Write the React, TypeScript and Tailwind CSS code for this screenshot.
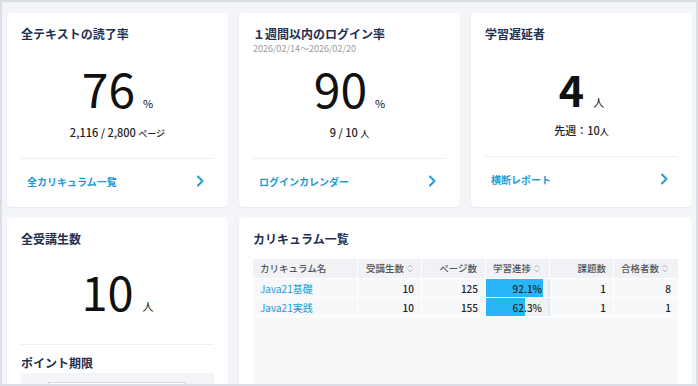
import { ReactNode } from 'react';

const FONT = { fontFamily: '"Noto Sans CJK JP", "Noto Sans", sans-serif' };

function Chevron() {
  return (
    <svg width="8" height="12" viewBox="0 0 8 12" fill="none">
      <path d="M2 1.5 L6.5 6 L2 10.5" stroke="#1e9ad6" strokeWidth="2" strokeLinecap="round" strokeLinejoin="round" />
    </svg>
  );
}

function SortIcon() {
  return (
    <svg width="6" height="9" viewBox="0 0 6 9" fill="none" className="ml-[3px]">
      <path d="M1 3.2 L3 1.2 L5 3.2 M1 5.8 L3 7.8 L5 5.8" stroke="#a8acb3" strokeWidth="0.9" strokeLinecap="round" strokeLinejoin="round" />
    </svg>
  );
}

type StatCardProps = {
  title: string;
  subtitle?: string;
  value: string;
  unit: string;
  bold?: boolean;
  detail: ReactNode;
  link: string;
};

function StatCard({ title, subtitle, value, unit, bold, detail, link }: StatCardProps) {
  return (
    <div className="flex flex-col rounded-[4px] bg-white px-[14px] pt-[12px] shadow-[0_1px_2px_rgba(0,0,0,0.06)]">
      <div className="h-[37px] shrink-0">
        <h2 className="text-[12px] font-bold leading-[18px] text-[#1f3050]">{title}</h2>
        {subtitle && <p className="mt-[1px] text-[9px] leading-[10px] text-[#9a9ca1]">{subtitle}</p>}
      </div>
      {bold ? (
        <div className="mt-[1px] flex h-[50px] shrink-0 items-baseline justify-center gap-[9px] leading-[50px] text-[#111]">
          <span className="text-[43px] font-semibold">{value}</span>
          <span className="text-[11px]">{unit}</span>
        </div>
      ) : (
        <div className="flex h-[50px] shrink-0 items-baseline justify-center gap-[8px] leading-[50px] text-[#111]">
          <span className="text-[48px]">{value}</span>
          <span className="text-[11px]">{unit}</span>
        </div>
      )}
      <div className={`${bold ? 'mt-[9px]' : 'mt-[12px]'} text-center text-[11px] font-medium leading-[16px] text-[#222]`}>
        {detail}
      </div>
      <div className="mt-[16px] border-t border-[#eceef1]" />
      <div className="mt-[12px] flex h-[20px] shrink-0 items-center justify-between pl-[6px] pr-[10px]">
        <span className="text-[10px] font-bold text-[#1e9ad6]">{link}</span>
        <Chevron />
      </div>
    </div>
  );
}

const CURRICULA = [
  { name: 'Java21基礎', students: 10, pages: 125, progress: 92.1, tasks: 1, passed: 8 },
  { name: 'Java21実践', students: 10, pages: 155, progress: 62.3, tasks: 1, passed: 1 },
];

export default function App() {
  return (
    <div
      style={FONT}
      className="h-[386px] w-[698px] overflow-hidden border-2 border-[#dcdee6] bg-[#f4f5f8] pl-[5px] pt-[11px]"
    >
      <div className="grid grid-cols-[221px_221px_221px] grid-rows-[194px_200px] gap-[11px]">
        <StatCard
          title="全テキストの読了率"
          value="76"
          unit="%"
          detail={
            <>
              2,116 / 2,800 <span className="text-[9px]">ページ</span>
            </>
          }
          link="全カリキュラム一覧"
        />
        <StatCard
          title="１週間以内のログイン率"
          subtitle="2026/02/14〜2026/02/20"
          value="90"
          unit="%"
          detail={
            <>
              9 / 10 <span className="text-[9px]">人</span>
            </>
          }
          link="ログインカレンダー"
        />
        <StatCard
          title="学習遅延者"
          value="4"
          unit="人"
          bold
          detail={
            <>
              先週：10<span className="text-[9px]">人</span>
            </>
          }
          link="横断レポート"
        />

        {/* 全受講生数 */}
        <div className="flex flex-col overflow-hidden rounded-[4px] bg-white px-[14px] pt-[12px] shadow-[0_1px_2px_rgba(0,0,0,0.06)]">
          <h2 className="h-[36px] shrink-0 text-[12px] font-bold leading-[18px] text-[#1f3050]">全受講生数</h2>
          <div className="flex h-[50px] shrink-0 items-baseline justify-center gap-[9px] leading-[50px] text-[#111]">
            <span className="text-[47px]">10</span>
            <span className="text-[11px]">人</span>
          </div>
          <div className="mt-[28px] shrink-0 border-t border-[#eceef1]" />
          <h2 className="mt-[9px] shrink-0 text-[12px] font-bold leading-[18px] text-[#1f3050]">ポイント期限</h2>
          <div className="mt-[1px] h-[60px] shrink-0 bg-[#f4f5f8] pl-[27px] pt-[9px]">
            <div className="h-[40px] w-[138px] border border-[#d3d6dc] bg-white" />
          </div>
        </div>

        {/* カリキュラム一覧 */}
        <div className="col-span-2 flex flex-col overflow-hidden rounded-[4px] bg-white px-[14px] pt-[12px] shadow-[0_1px_2px_rgba(0,0,0,0.06)]">
          <h2 className="shrink-0 text-[12px] font-bold leading-[18px] text-[#1f3050]">カリキュラム一覧</h2>
          <div className="mt-[11px] h-[200px] shrink-0 bg-[#f7f8fa] text-[10px]">
            <div className="grid h-[19px] grid-cols-[105px_64px_64px_64px_64px_64px] bg-[#f0f2f5] text-[9.5px] font-medium text-[#555]">
              <div className="flex items-center border-r border-white pl-[7px]">カリキュラム名</div>
              <div className="flex items-center justify-end border-r border-white pr-[8px]">
                受講生数
                <SortIcon />
              </div>
              <div className="flex items-center justify-end border-r border-white pr-[8px]">ページ数</div>
              <div className="flex items-center justify-end border-r border-white pr-[9px]">
                学習進捗
                <SortIcon />
              </div>
              <div className="flex items-center justify-end border-r border-white pr-[7px]">課題数</div>
              <div className="flex items-center justify-end pr-[10px]">
                合格者数
                <SortIcon />
              </div>
            </div>
            {CURRICULA.map((c) => (
              <div
                key={c.name}
                className="grid h-[19px] grid-cols-[105px_64px_64px_64px_64px_64px] border-t border-white font-medium text-[#222]"
              >
                <div className="flex items-center border-r border-white pl-[7px] font-normal text-[#1e9ad6]">{c.name}</div>
                <div className="flex items-center justify-end border-r border-white pr-[7px]">{c.students}</div>
                <div className="flex items-center justify-end border-r border-white pr-[7px]">{c.pages}</div>
                <div className="relative flex items-center justify-end border-r-2 border-[#d9edf8] bg-[#eff1f4] pr-[6px]">
                  <div className="absolute inset-y-0 left-0 bg-[#29b6f6]" style={{ width: `${c.progress}%` }} />
                  <span className="relative">{c.progress}%</span>
                </div>
                <div className="flex items-center justify-end border-r border-white pr-[7px]">{c.tasks}</div>
                <div className="flex items-center justify-end pr-[7px]">{c.passed}</div>
              </div>
            ))}
            <div className="border-t border-white" />
          </div>
        </div>
      </div>
    </div>
  );
}
